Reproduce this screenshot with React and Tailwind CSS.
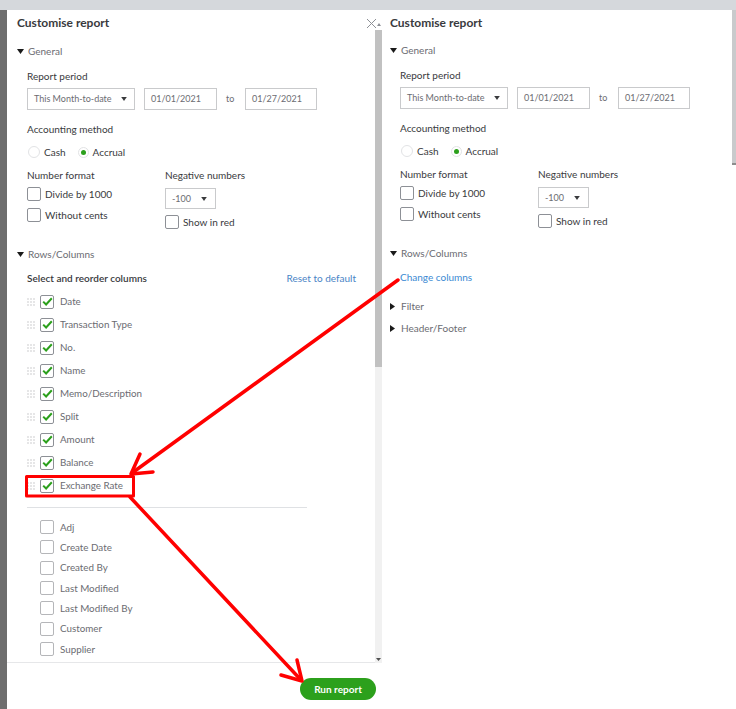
import React from "react"

const TriDown = ({ w = 7, h = 5, color = "#1a1a1a" }) => (
  <svg width={w} height={h} viewBox="0 0 7 5" className="shrink-0">
    <path d="M0 0h7L3.5 5z" fill={color} />
  </svg>
)

const TriRight = () => (
  <svg width="5" height="7" viewBox="0 0 5 7" className="shrink-0">
    <path d="M0 0v7l5-3.5z" fill="#1a1a1a" />
  </svg>
)

const Box = ({ checked, light }) => (
  <span
    className={`w-[14px] h-[14px] rounded-[2px] bg-white border flex items-center justify-center shrink-0 ${
      light ? "border-[#b5b6b9]" : "border-[#8d9096]"
    }`}
  >
    {checked && (
      <svg width="11" height="9" viewBox="0 0 11 9">
        <path d="M1.2 4.6l2.9 2.9L9.8 1.3" stroke="#2ca01c" strokeWidth="2" fill="none" />
      </svg>
    )}
  </span>
)

const Grip = () => (
  <svg width="8" height="8" viewBox="0 0 8 8" className="shrink-0">
    {[1, 4, 7].map((x) =>
      [1, 4, 7].map((y) => <rect key={x + "-" + y} x={x - 0.6} y={y - 0.6} width="1.2" height="1.2" fill="#b9babd" />)
    )}
  </svg>
)

const Field = ({ className, children }) => (
  <div
    className={`h-full border border-[#c9cacc] bg-white flex items-center pl-[6px] text-[9px] text-[#6b6c72] ${className}`}
  >
    {children}
  </div>
)

const Heading = ({ label, open = true, className = "" }) => (
  <div className={`h-[16px] flex items-center gap-[4px] text-[10px] text-[#6b6c72] ${className}`}>
    {open ? <TriDown /> : <span className="w-[7px] flex"><TriRight /></span>}
    <span>{label}</span>
  </div>
)

const General = () => (
  <>
    <div className="h-[30px] flex items-center">
      <Heading label="General" />
    </div>
    <div className="ml-[10px] text-[#393a3d] text-[10px]">
      <div className="h-[20px] flex items-center">Report period</div>
      <div className="mt-[2px] h-[22px] flex items-center">
        <Field className="w-[108px] justify-between pr-[7px]">
          <span>This Month-to-date</span>
          <TriDown w={6} h={4} color="#393a3d" />
        </Field>
        <Field className="ml-[9px] w-[73px]">01/01/2021</Field>
        <span className="ml-[9px] w-[19px] text-[9px] text-[#6b6c72]">to</span>
        <Field className="w-[72px]">01/27/2021</Field>
      </div>
      <div className="mt-[8px] h-[22px] flex items-center">Accounting method</div>
      <div className="h-[24px] flex items-center">
        <span className="ml-[1px] w-[12px] h-[12px] rounded-full border border-[#e2e3e5]" />
        <span className="ml-[4px]">Cash</span>
        <span className="ml-[12px] w-[11px] h-[11px] rounded-full border border-[#e2e3e5] flex items-center justify-center">
          <span className="w-[5px] h-[5px] rounded-full bg-[#2ca01c]" />
        </span>
        <span className="ml-[4px]">Accrual</span>
      </div>
      <div className="flex">
        <div className="w-[138px]">
          <div className="h-[22px] flex items-center">Number format</div>
          <div className="mt-[1px] h-[14px] flex items-center">
            <Box />
            <span className="ml-[4px]">Divide by 1000</span>
          </div>
          <div className="mt-[7px] h-[14px] flex items-center">
            <Box />
            <span className="ml-[4px]">Without cents</span>
          </div>
        </div>
        <div>
          <div className="h-[22px] flex items-center">Negative numbers</div>
          <div className="mt-[2px] h-[21px] w-[51px]">
            <Field className="justify-between pr-[8px]">
              <span>-100</span>
              <TriDown w={6} h={4} color="#393a3d" />
            </Field>
          </div>
          <div className="mt-[6px] h-[14px] flex items-center">
            <Box />
            <span className="ml-[4px]">Show in red</span>
          </div>
        </div>
      </div>
    </div>
  </>
)

const checkedCols = [
  "Date",
  "Transaction Type",
  "No.",
  "Name",
  "Memo/Description",
  "Split",
  "Amount",
  "Balance",
  "Exchange Rate",
]

const otherCols = ["Adj", "Create Date", "Created By", "Last Modified", "Last Modified By", "Customer", "Supplier"]

const LeftPanel = () => (
  <div className="relative w-[375px] flex flex-col bg-white">
    <div className="h-[653px] flex">
      <div className="flex-1 pl-[10px] border-b border-[#e6e7e9]">
        <div className="h-[26px] flex items-center text-[12px] font-bold text-[#393a3d]">Customise report</div>
        <General />
        <Heading label="Rows/Columns" className="mt-[17px]" />
        <div className="ml-[10px]">
          <div className="mt-[8px] h-[16px] flex items-center justify-between pr-[19px] text-[10px]">
            <span className="font-semibold text-[#393a3d]">Select and reorder columns</span>
            <span className="text-[#4a84c6]">Reset to default</span>
          </div>
          <div className="mt-[4px]">
            {checkedCols.map((c) => (
              <div key={c} className="h-[23px] flex items-center text-[9.8px] text-[#6b6c72]">
                <Grip />
                <span className="ml-[5px] flex">
                  <Box checked />
                </span>
                <span className="ml-[6px]">{c}</span>
              </div>
            ))}
          </div>
          <div className="mt-[10px] w-[280px] h-px bg-[#dfe1e4]" />
          <div className="mt-[9px]">
            {otherCols.map((c) => (
              <div key={c} className="h-[20.33px] flex items-center text-[9.8px] text-[#6b6c72]">
                <span className="ml-[13px] flex">
                  <Box light />
                </span>
                <span className="ml-[6px]">{c}</span>
              </div>
            ))}
          </div>
        </div>
      </div>
      <div className="w-[7px] flex flex-col">
        <div className="h-[20px] flex items-end justify-center pb-[4px]">
          <svg width="4" height="3" viewBox="0 0 4 3">
            <path d="M0 3h4L2 0z" fill="#8d9096" />
          </svg>
        </div>
        <div className="h-[337px] bg-[#c1c1c1]" />
        <div className="flex-1 bg-[#f1f1f1] flex items-end justify-center pb-[2px]">
          <svg width="5" height="3" viewBox="0 0 5 3">
            <path d="M0 0h5L2.5 3z" fill="#505050" />
          </svg>
        </div>
      </div>
    </div>
    <div className="flex-1 flex justify-end items-start pt-[15px] pr-[6px]">
      <button className="w-[76px] h-[22px] rounded-full bg-[#2ca01c] text-white text-[10px] font-bold">Run report</button>
    </div>
    <svg className="absolute left-[359px] top-[8px]" width="11" height="11" viewBox="0 0 11 11">
      <path d="M1 1l9 9M10 1l-9 9" stroke="#8d9096" strokeWidth="1" />
    </svg>
  </div>
)

const RightPanel = () => (
  <div className="flex-1 flex bg-white">
    <div className="flex-1 pl-[8px]">
      <div className="h-[25px] flex items-center text-[12px] font-bold text-[#393a3d]">Customise report</div>
      <General />
      <Heading label="Rows/Columns" className="mt-[17px]" />
      <div className="ml-[10px] mt-[8px] h-[16px] flex items-center text-[10px] text-[#3a8ad3]">Change columns</div>
      <Heading label="Filter" open={false} className="mt-[13px]" />
      <Heading label="Header/Footer" open={false} className="mt-[6px]" />
    </div>
    <div className="w-[4px]">
      <div className="h-[155px] bg-[#c9cacc] border-b-2 border-[#8d8d8d]" />
    </div>
  </div>
)

const Annotations = () => (
  <svg className="absolute inset-0 pointer-events-none" width="736" height="709" viewBox="0 0 736 709">
    <g stroke="#ff0000" strokeWidth="3.5" fill="none" strokeLinecap="round" strokeLinejoin="round">
      <rect x="26.5" y="476.5" width="107" height="19.5" strokeWidth="3" strokeLinecap="butt" />
      <path d="M398 280L132 473" />
      <path d="M153 472L131 474L140 454" />
      <path d="M130 497L301 680" />
      <path d="M297 660L302 681L281 675" />
    </g>
  </svg>
)

export default function App() {
  return (
    <div className="relative w-[736px] h-[709px] overflow-hidden bg-white font-['Lato',sans-serif]">
      <div className="h-[10px] bg-[#d5d8dc]" />
      <div className="flex h-[699px]">
        <div className="w-[7px] bg-[#6e6e6e]" />
        <LeftPanel />
        <RightPanel />
      </div>
      <Annotations />
    </div>
  )
}
